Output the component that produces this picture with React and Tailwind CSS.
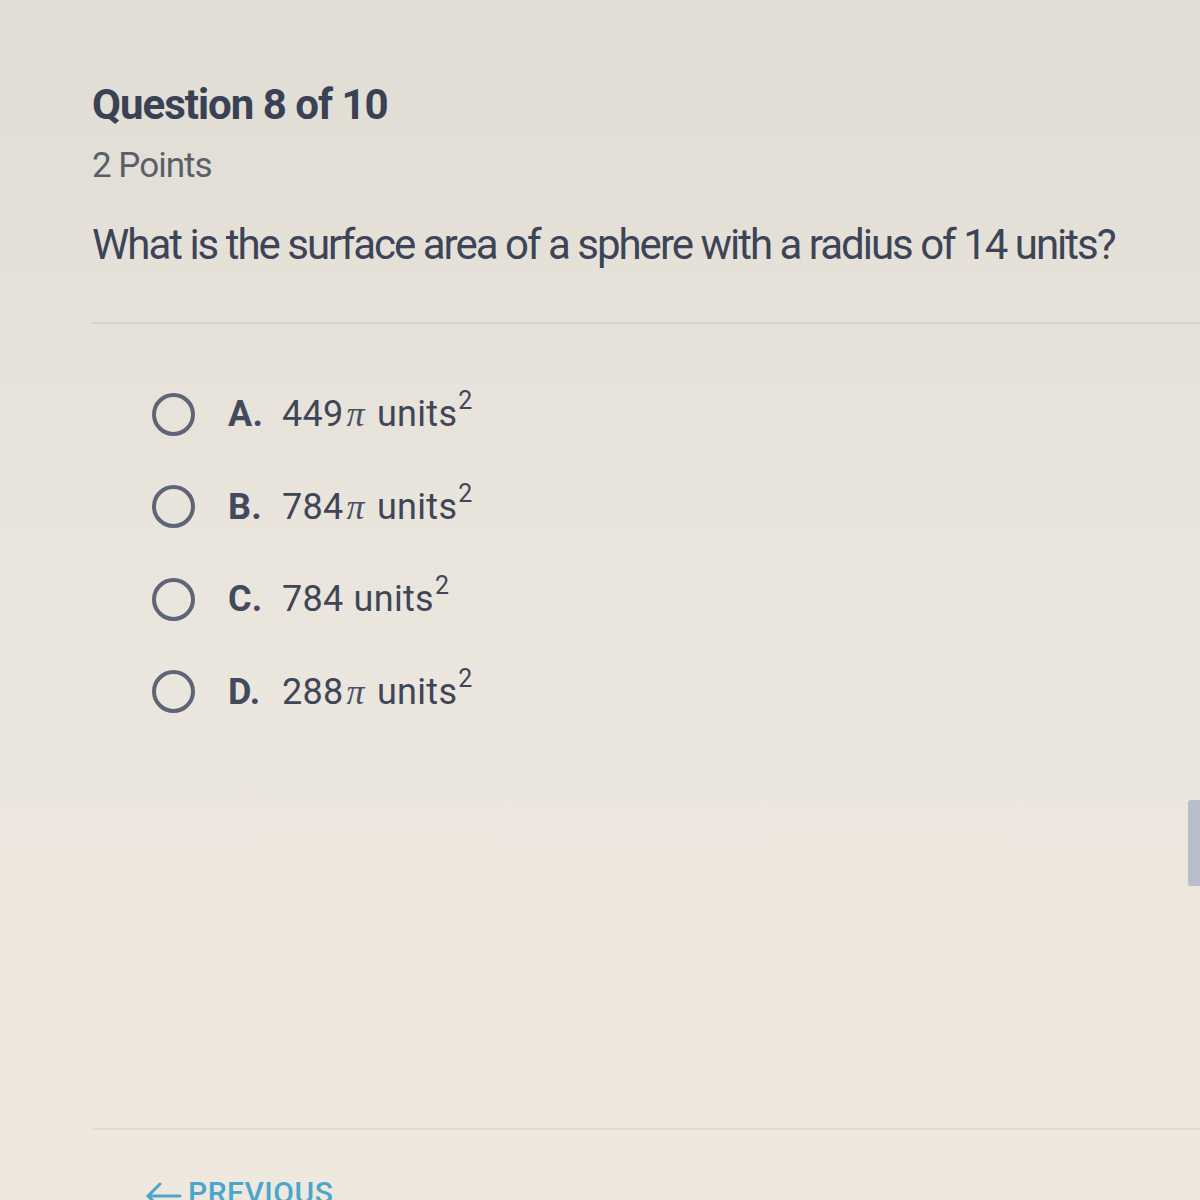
import React from "react";

const OPTIONS = [
  { letter: "A.", value: "449", pi: true },
  { letter: "B.", value: "784", pi: true },
  { letter: "C.", value: "784", pi: false },
  { letter: "D.", value: "288", pi: true },
];

const Option = ({ letter, value, pi }) => (
  <div className="flex items-center h-[92.5px]">
    <div className="w-[43px] h-[43px] rounded-full border-[4px] border-[#5f6576] ml-[152px]" />
    <div className="ml-[33px] flex items-baseline text-[36px] text-[#3f4658] leading-none tracking-[0.3px]">
      <span className="font-bold text-[#424a5e] w-[54px]">{letter}</span>
      <span>{value}</span>
      {pi && (
        <span
          className="italic text-[36px] ml-[3px] mr-[12px] text-[#4b5263]"
          style={{ fontFamily: '"Liberation Serif", serif' }}
        >
          π
        </span>
      )}
      <span className={pi ? "" : "ml-[10px]"}>units</span>
      <span className="text-[25px] relative -top-[17px] ml-[1px]">2</span>
    </div>
  </div>
);

export default function App() {
  return (
    <div
      className="relative w-[1200px] h-[1200px] overflow-hidden bg-gradient-to-b from-[#e0ddd5] via-[#ebe6dd] to-[#eee8df]"
      style={{ fontFamily: "Roboto, 'Liberation Sans', sans-serif" }}
    >
      <div className="pt-[81px] pl-[92px]">
        <h1 className="text-[42px] font-bold text-[#3a4154] leading-[48px] tracking-[-1px]">Question 8 of 10</h1>
        <p className="mt-[17px] text-[35px] text-[#5b5f68] leading-[40px] tracking-[-1px]">2 Points</p>
        <p className="mt-[34px] text-[42px] text-[#3d4457] leading-[50px] tracking-[-2px]">
          What is the surface area of a sphere with a radius of 14 units?
        </p>
      </div>
      <div className="mt-[52px] ml-[92px] h-[2px] bg-[#d0d3d3]" />

      <div className="mt-[44px]">
        {OPTIONS.map((o) => (
          <Option key={o.letter} {...o} />
        ))}
      </div>

      <div className="absolute left-[92px] right-0 top-[1128px] h-[2px] bg-[#e0ddd7]" />

      <div className="absolute left-[144px] top-[1170px] flex items-center gap-[6px] text-[#4aa6cc]">
        <svg width="38" height="30" viewBox="0 0 38 30" fill="none" stroke="currentColor" strokeWidth="3" strokeLinecap="round">
          <path d="M36 18H4M16 6L4 18L16 30" />
        </svg>
        <span className="text-[30px] font-medium tracking-[0.5px]">PREVIOUS</span>
      </div>

      <div className="absolute right-0 top-[800px] w-[12px] h-[86px] rounded-l-[3px] bg-[#b6bfcb]" />
    </div>
  );
}
